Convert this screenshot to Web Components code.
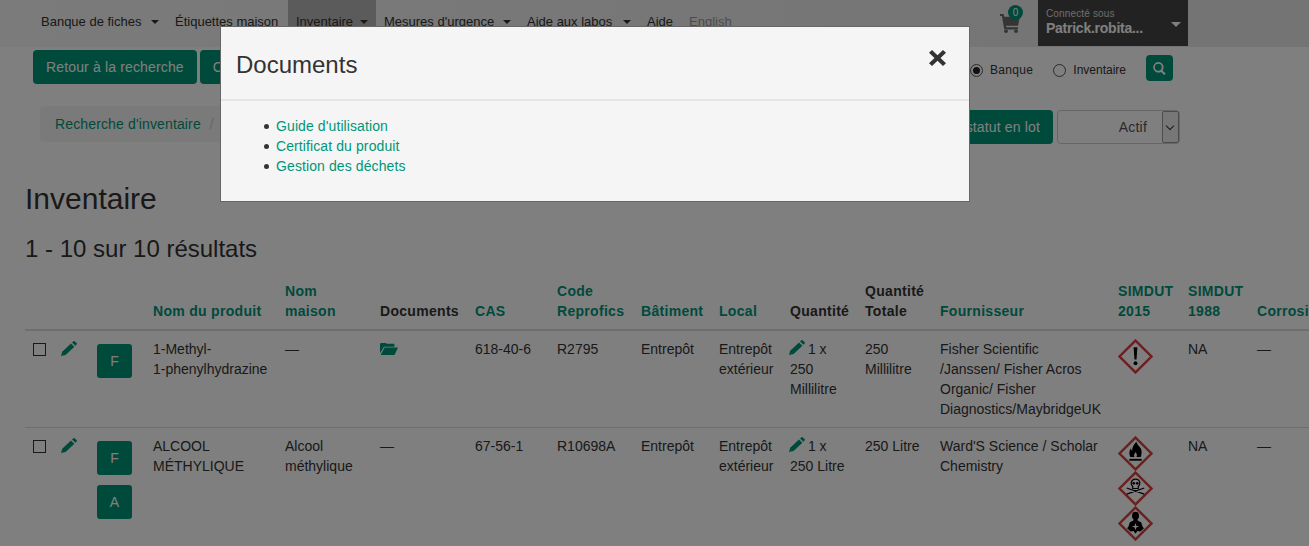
<!DOCTYPE html>
<html lang="fr">
<head>
<meta charset="UTF-8">
<title>Inventaire</title>
<style>
  html, body { margin: 0; height: 100%; overflow: hidden; background: #fff; }
  body { font: 14px/20px "Liberation Sans", Arial, sans-serif; color: #333; }
  doc-modal li { display: block; position: relative; }
  doc-modal li::before { content: ""; position: absolute; left: -12px; top: 8px; width: 5px; height: 5px; border-radius: 50%; background: #333; }
  doc-modal a { color: #009578; text-decoration: none; letter-spacing: .1px; }
</style>
</head>
<body>
  <app-navbar></app-navbar>
  <app-toolbar></app-toolbar>
  <app-heading></app-heading>
  <inv-table></inv-table>
  <doc-modal heading="Documents">
    <li><a href="#">Guide d'utilisation</a></li>
    <li><a href="#">Certificat du produit</a></li>
    <li><a href="#">Gestion des déchets</a></li>
  </doc-modal>

<script>
const GREEN = '#009578'

const ICONS = {
  pencil: '<path d="M0 16l1.200-4.600L10 2.600l3.400 3.400-8.800 8.800z"/><path d="M11 1.600l1.200-1.200c.5-.5 1.100-.5 1.600 0l1.800 1.800c.5.5.5 1.100 0 1.600L14.400 5z"/>',
  folder: '<path d="M0 2.500C0 1.700.6 1 1.400 1h4c.7 0 1.100.4 1.300 1h6.600c.7 0 1.200.5 1.200 1.200V5H4L0 12z"/><path d="M4.600 6H18l-3.200 7.500c-.1.300-.4.500-.7.500H.6z"/>',
  search: '<path fill-rule="evenodd" d="M6.500 0a6.500 6.500 0 0 1 5.200 10.400l3.900 3.900-1.800 1.800-3.900-3.900A6.500 6.500 0 1 1 6.500 0zm0 2.300a4.200 4.200 0 1 0 0 8.400 4.200 4.200 0 0 0 0-8.400z"/>',
  close: '<path d="M3.200 0L9 5.800 14.800 0 18 3.200 12.200 9 18 14.800 14.800 18 9 12.200 3.200 18 0 14.800 5.800 9 0 3.200z"/>',
  cart: '<path d="M0 0h3.500l.8 3H20l-2 10H6l.3 1.600H18V17H4.300L1.900 2.300H0z"/><circle cx="6" cy="19" r="2"/><circle cx="16" cy="19" r="2"/>'
}
const BOXES = { pencil: '0 0 16 16', folder: '0 0 18 14', search: '0 0 16 16', close: '0 0 18 18', cart: '0 0 20 21' }

class AppIcon extends HTMLElement {
  connectedCallback() {
    const name = this.getAttribute('name')
    this.attachShadow({ mode: 'open' }).innerHTML = `
      <style>
        :host { display: inline-block; line-height: 0; }
        svg { width: 100%; height: 100%; fill: currentColor; display: block; }
      </style>
      <svg viewBox="${BOXES[name]}" preserveAspectRatio="none">${ICONS[name]}</svg>`
  }
}
customElements.define('app-icon', AppIcon)

// Hazard diamonds of the SIMDUT 2015 column
const GHS = {
  exclam: '<path d="M15.200 8h3.600l-.8 12h-2z"/><circle cx="17" cy="23.500" r="1.900"/>',
  flame: '<path d="M17.800 5.500c.5 2.800 3 3.800 4.300 6.500 1.200 2.500 1.100 5.500 0 8.500H12c-1.500-2.700-1.300-6 .6-8.500.1 1.100.4 1.900 1.100 2.500-.3-3.500 2-6.300 4.100-9z"/><path fill="#fff" d="M17 15.500c.6 1.200 1.500 2 1.400 3.200 0 .7-.3 1.300-.6 1.800h-1.700c-.4-.6-.6-1.300-.4-2 .2-1.100 1-1.800 1.300-3z"/><rect x="11" y="22.200" width="12" height="1.800"/>',
  skull: '<path fill="none" stroke="#000" stroke-width="1.200" d="M12.800 12a4.200 4.200 0 1 1 8.400 0c0 1.700-.8 2.500-1.500 3v2h-5.400v-2c-.7-.5-1.500-1.300-1.500-3zM8.500 16.500l17 6M25.500 16.500l-17 6"/><circle cx="15.300" cy="12" r="1.300"/><circle cx="18.700" cy="12" r="1.300"/>',
  health: '<ellipse cx="17" cy="9.500" rx="3.400" ry="4"/><path d="M15.300 12.500h3.400l.6 1.800 3.200 1.400 1.300 4.300 1.400 1.500-3.400 3.200-3-.5-1.800 2.800-1.800-2.800-3 .5-3.400-3.200 1.400-1.500 1.300-4.300 3.200-1.400z"/><path fill="#fff" d="M17 16.500l.8 2.700 2.700.8-2.700.8-.8 2.700-.8-2.700-2.700-.8 2.700-.8z"/>'
}
class GhsPict extends HTMLElement {
  connectedCallback() {
    this.attachShadow({ mode: 'open' }).innerHTML = `
      <style>
        :host { display: block; width: 35px; height: 35px; }
        svg { display: block; width: 35px; height: 35px; }
      </style>
      <svg viewBox="0 0 34 34">
        <path d="M17 1.500L32.500 17 17 32.500 1.500 17z" fill="none" stroke="#d8403f" stroke-width="2.400"/>
        ${GHS[this.getAttribute('kind')]}
      </svg>`
  }
}
customElements.define('ghs-pict', GhsPict)

class AppNavbar extends HTMLElement {
  connectedCallback() {
    const items = [
      ['Banque de fiches', 134, 1], ['Étiquettes maison', 121, 0], ['Inventaire', 88, 1, 1],
      ['Mesures d\'urgence', 143, 1], ['Aide aux labos', 120, 1], ['Aide', 42, 0]
    ]
    this.attachShadow({ mode: 'open' }).innerHTML = `
      <style>
        :host { display: flex; height: 47px; padding-left: 33px; box-sizing: border-box; font-size: 13px;
          background: linear-gradient(90deg, #f6f6f6, #e8e8e8); color: #333; }
        .item { display: flex; align-items: center; padding: 0 8px 4px; height: 47px; box-sizing: border-box; white-space: nowrap; }
        .item.on { background: #b6b6b6; }
        .caret { width: 0; height: 0; margin-left: auto; border: 4px solid transparent;
          border-top-color: #333; border-bottom: 0; }
        .lang { color: #999; }
        .right { margin-left: auto; display: flex; margin-right: 121px; }
        .cart { position: relative; width: 20px; height: 19px; margin: 14px 18px 0 0; color: #6a6a6a; }
        .count { position: absolute; left: 8px; top: -9px; width: 15px; height: 15px; border-radius: 50%;
          background: ${GREEN}; color: #fff; font-size: 10px; line-height: 15px; text-align: center; }
        .user { width: 150px; height: 46px; box-sizing: border-box; background: #444; color: #fff;
          padding: 7px 8px; position: relative; }
        .user small { display: block; font-size: 10px; line-height: 14px; color: #ddd; letter-spacing: .15px; }
        .user b { display: block; font-size: 14px; line-height: 15px; color: #fff; letter-spacing: -.25px; }
        .user i { position: absolute; right: 7px; top: 22px; border: 5px solid transparent; border-top-color: #fff; border-bottom: 0; }
      </style>
      ${items.map(([t, w, c, on]) => `<div class="item${on ? ' on' : ''}" style="width:${w}px">${t}${c ? '<span class="caret"></span>' : ''}</div>`).join('')}
      <div class="item lang">English</div>
      <div class="right">
        <div class="cart"><app-icon name="cart" style="width:20px;height:19px"></app-icon><span class="count">0</span></div>
        <div class="user"><small>Connecté sous</small><b>Patrick.robita...</b><i></i></div>
      </div>`
  }
}
customElements.define('app-navbar', AppNavbar)

class AppToolbar extends HTMLElement {
  connectedCallback() {
    this.attachShadow({ mode: 'open' }).innerHTML = `
      <style>
        :host { display: block; color: #333; }
        .row { display: flex; align-items: flex-start; }
        .one { height: 34px; margin-top: 3px; padding-left: 33px; padding-right: 136px; }
        .two { height: 36px; margin-top: 22px; padding-left: 40px; padding-right: 129px; }
        .btn { height: 34px; box-sizing: border-box; padding: 0 13px; margin-right: 3px; background: ${GREEN}; color: #fff;
          border-radius: 4px; display: flex; align-items: center; white-space: nowrap; letter-spacing: .15px; }
        .radio { display: flex; align-items: center; font-size: 12px; margin: 10px 0 0 20px; }
        .radio.on { margin-left: auto; letter-spacing: .33px; }
        .radio span { width: 11px; height: 11px; border: 1px solid #555; border-radius: 50%; margin-right: 7px; position: relative; }
        .radio.on span::after { content: ""; position: absolute; left: 2px; top: 2px; width: 7px; height: 7px; border-radius: 50%; background: #222; }
        .search { width: 27px; height: 26px; margin: 5px 0 0 20px; background: ${GREEN}; border-radius: 4px; color: #fff;
          display: flex; align-items: center; justify-content: center; }
        .crumb { background: #f5f5f5; border-radius: 4px; height: 36px; padding: 0 15px; display: flex; align-items: center; color: #ccc; width: 400px; box-sizing: border-box; }
        .crumb a { color: ${GREEN}; margin-right: 9px; letter-spacing: .14px; }
        .lot { margin: 4px 4px 0 auto; }
        .select { width: 123px; height: 34px; margin-top: 4px; box-sizing: border-box; border: 1px solid #ccc; border-radius: 4px; display: flex; color: #555; }
        .select span { flex: 1; text-align: right; padding: 6px 15px 0 0; letter-spacing: .2px; }
        .select i { width: 15px; background: #eee; border: 1px solid #999; border-radius: 2px; position: relative; }
        .select i::after { content: ""; position: absolute; left: 4px; top: 11px; width: 5px; height: 5px; border: solid #333; border-width: 0 1px 1px 0; transform: rotate(45deg); }
      </style>
      <div class="row one">
        <div class="btn">Retour à la recherche</div>
        <div class="btn">Colonnes</div>
        <label class="radio on"><span></span>Banque</label>
        <label class="radio"><span></span>Inventaire</label>
        <div class="search"><app-icon name="search" style="width:13px;height:13px"></app-icon></div>
      </div>
      <div class="row two">
        <div class="crumb"><a>Recherche d'inventaire</a>/</div>
        <div class="btn lot">Changer le statut en lot</div>
        <div class="select"><span>Actif</span><i></i></div>
      </div>`
  }
}
customElements.define('app-toolbar', AppToolbar)

class AppHeading extends HTMLElement {
  connectedCallback() {
    this.attachShadow({ mode: 'open' }).innerHTML = `
      <style>
        :host { display: block; padding-left: 25px; color: #333; }
        h1 { font-size: 30px; font-weight: 400; line-height: 33px; margin: 0; padding-top: 40px; }
        h2 { font-size: 24px; font-weight: 400; line-height: 26px; margin: 0; padding-top: 21px; }
      </style>
      <h1>Inventaire</h1>
      <h2>1 - 10 sur 10 résultats</h2>`
  }
}
customElements.define('app-heading', AppHeading)

class InvTable extends HTMLElement {
  connectedCallback() {
    const widths = [28, 36, 56, 132, 95, 95, 82, 84, 78, 71, 75, 75, 178, 70, 69, 100]
    const heads = [
      ['', 0], ['', 0], ['', 0], ['Nom du produit', 1], ['Nom<br>maison', 1], ['Documents', 0], ['CAS', 1],
      ['Code<br>Reprofics', 1], ['Bâtiment', 1], ['Local', 1], ['Quantité', 0], ['Quantité<br>Totale', 0],
      ['Fournisseur', 1], ['SIMDUT<br>2015', 1], ['SIMDUT<br>1988', 1], ['Corrosif', 1]
    ]
    const check = '<span class="check"></span>'
    const pen = '<app-icon class="pen" name="pencil"></app-icon>'
    const badge = t => `<div class="badge">${t}</div>`
    const ghs = k => `<ghs-pict kind="${k}"></ghs-pict>`
    const rows = [
      [check, pen, badge('F'), '1-Methyl-<br>1-phenylhydrazine', '—', '<app-icon class="folder" name="folder"></app-icon>',
        '618-40-6', 'R2795', 'Entrepôt', 'Entrepôt extérieur', `<app-icon class="pen in" name="pencil"></app-icon> 1 x 250 Millilitre`,
        '250 Millilitre', 'Fisher Scientific /Janssen/ Fisher Acros Organic/ Fisher Diagnostics/MaybridgeUK', ghs('exclam'), 'NA', '—'],
      [check, pen, badge('F') + badge('A'), 'ALCOOL MÉTHYLIQUE', 'Alcool méthylique', '—',
        '67-56-1', 'R10698A', 'Entrepôt', 'Entrepôt extérieur', `<app-icon class="pen in" name="pencil"></app-icon> 1 x 250 Litre`,
        '250 Litre', 'Ward\'S Science / Scholar Chemistry', ghs('flame') + ghs('skull') + ghs('health'), 'NA', '—']
    ]
    this.attachShadow({ mode: 'open' }).innerHTML = `
      <style>
        :host { display: block; padding: 11px 0 0 25px; }
        table { border-collapse: collapse; table-layout: fixed; width: ${widths.reduce((a, b) => a + b)}px; color: #333; }
        th, td { padding: 8px; vertical-align: top; text-align: left; overflow: hidden; }
        th { vertical-align: bottom; font-weight: 700; letter-spacing: .3px; white-space: nowrap; border-bottom: 2px solid #ddd; color: #333; }
        th.sort { color: ${GREEN}; }
        td { border-bottom: 1px solid #ddd; }
        .check { display: block; width: 11px; height: 11px; border: 1px solid #333; margin-top: 4px; }
        .pen { display: block; width: 16px; height: 15px; color: ${GREEN}; margin-top: 2px; }
        .pen.in { display: inline-block; margin: 0 -1px 0 -1px; vertical-align: -1px; }
        .folder { display: block; width: 18px; height: 13px; color: ${GREEN}; margin-top: 3px; }
        .badge { width: 35px; height: 34px; margin: 5px 0 10px; background: ${GREEN}; color: #fff; border-radius: 3px;
          text-align: center; line-height: 34px; }
        .badge + .badge { margin-top: 0; }
      </style>
      <table>
        <colgroup>${widths.map(w => `<col style="width:${w}px">`).join('')}</colgroup>
        <thead><tr>${heads.map(([t, s]) => `<th class="${s ? 'sort' : ''}">${t}</th>`).join('')}</tr></thead>
        <tbody>${rows.map(r => `<tr>${r.map(c => `<td>${c}</td>`).join('')}</tr>`).join('')}</tbody>
      </table>`
  }
}
customElements.define('inv-table', InvTable)

const modalTpl = document.createElement('template')
modalTpl.innerHTML = `
  <style>
    :host { position: fixed; inset: 0; background: rgba(0,0,0,.5); display: block; }
    .dialog { position: absolute; left: 220px; top: 26px; width: 750px; box-sizing: border-box; background: #f5f5f5;
      border: 1px solid #666; color: #333; }
    header { height: 74px; box-sizing: border-box; border-bottom: 2px solid #e5e5e5; padding: 22px 15px 0; display: flex; justify-content: space-between; }
    h4 { margin: 0; font-size: 24px; font-weight: 400; line-height: 32px; }
    app-icon { width: 17px; height: 16px; margin: 1px 8px 0 0; color: #333; }
    .body { padding: 15px 15px 15px 55px; }
    ul { margin: 0 0 10px; padding: 0; }
  </style>
  <div class="dialog">
    <header><h4></h4><app-icon name="close"></app-icon></header>
    <div class="body"><ul><slot></slot></ul></div>
  </div>`
class DocModal extends HTMLElement {
  connectedCallback() {
    const root = this.attachShadow({ mode: 'open' })
    root.appendChild(modalTpl.content.cloneNode(true))
    root.querySelector('h4').textContent = this.getAttribute('heading')
  }
}
customElements.define('doc-modal', DocModal)
</script>
</body>
</html>
